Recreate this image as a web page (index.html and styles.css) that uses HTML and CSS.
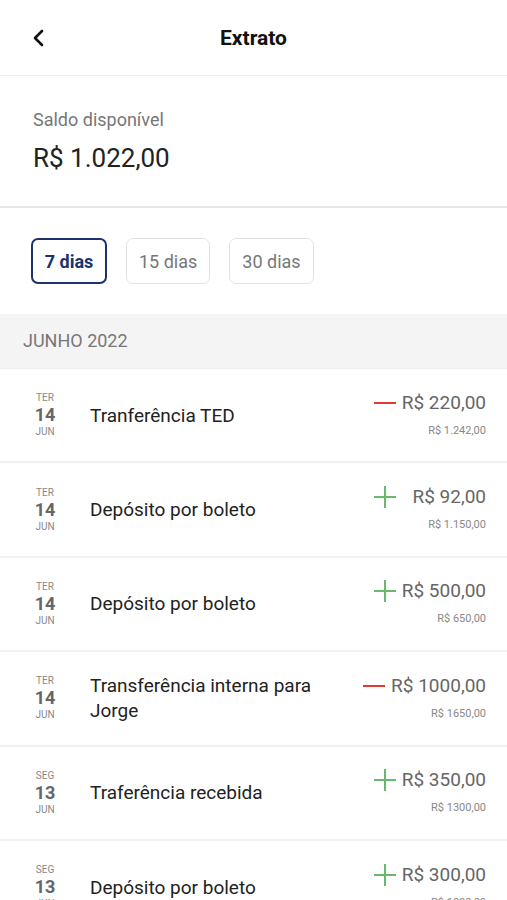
FILE: index.html
```html
<!DOCTYPE html>
<html lang="pt-BR">

<head>
  <meta charset="UTF-8" />
  <title>Extrato</title>
  <link rel="stylesheet" href="styles.css">
</head>

<body>
  <header class="topo">
    <svg class="voltar" width="14" height="18" viewBox="0 0 14 18">
      <path d="M10 2 L3 9 L10 16" fill="none" stroke="#111" stroke-width="2.6" stroke-linecap="round" stroke-linejoin="round" />
    </svg>
    <h1>Extrato</h1>
  </header>

  <section class="saldo">
    <p class="saldo-rotulo">Saldo disponível</p>
    <p class="saldo-valor">R$ 1.022,00</p>
  </section>

  <nav class="filtros">
    <button class="filtro ativo">7 dias</button>
    <button class="filtro">15 dias</button>
    <button class="filtro">30 dias</button>
  </nav>

  <div class="mes">JUNHO 2022</div>

  <ul class="lista">
    <li class="item">
      <div class="data"><span class="dia-sem">TER</span><span class="dia">14</span><span class="mes-ab">JUN</span></div>
      <div class="descricao">Tranferência TED</div>
      <div class="valores">
        <div class="linha-valor"><span class="menos"></span><span class="valor">R$ 220,00</span></div>
        <div class="saldo-item">R$ 1.242,00</div>
      </div>
    </li>
    <li class="item">
      <div class="data"><span class="dia-sem">TER</span><span class="dia">14</span><span class="mes-ab">JUN</span></div>
      <div class="descricao">Depósito por boleto</div>
      <div class="valores">
        <div class="linha-valor"><span class="mais"></span><span class="valor">R$ 92,00</span></div>
        <div class="saldo-item">R$ 1.150,00</div>
      </div>
    </li>
    <li class="item">
      <div class="data"><span class="dia-sem">TER</span><span class="dia">14</span><span class="mes-ab">JUN</span></div>
      <div class="descricao">Depósito por boleto</div>
      <div class="valores">
        <div class="linha-valor"><span class="mais"></span><span class="valor">R$ 500,00</span></div>
        <div class="saldo-item">R$ 650,00</div>
      </div>
    </li>
    <li class="item">
      <div class="data"><span class="dia-sem">TER</span><span class="dia">14</span><span class="mes-ab">JUN</span></div>
      <div class="descricao">Transferência interna para Jorge</div>
      <div class="valores">
        <div class="linha-valor"><span class="menos"></span><span class="valor">R$ 1000,00</span></div>
        <div class="saldo-item">R$ 1650,00</div>
      </div>
    </li>
    <li class="item">
      <div class="data"><span class="dia-sem">SEG</span><span class="dia">13</span><span class="mes-ab">JUN</span></div>
      <div class="descricao">Traferência recebida</div>
      <div class="valores">
        <div class="linha-valor"><span class="mais"></span><span class="valor">R$ 350,00</span></div>
        <div class="saldo-item">R$ 1300,00</div>
      </div>
    </li>
    <li class="item">
      <div class="data"><span class="dia-sem">SEG</span><span class="dia">13</span><span class="mes-ab">JUN</span></div>
      <div class="descricao">Depósito por boleto</div>
      <div class="valores">
        <div class="linha-valor"><span class="mais"></span><span class="valor">R$ 300,00</span></div>
        <div class="saldo-item">R$ 1000,00</div>
      </div>
    </li>
  </ul>
</body>

</html>
```

FILE: styles.css
```css
body {
  margin: 0;
  font-family: Roboto, "Liberation Sans", sans-serif;
  background: #fff;
  color: #222;
}

p {
  margin: 0;
}

.topo {
  position: relative;
  height: 75px;
  display: flex;
  align-items: center;
  justify-content: center;
  border-bottom: 1px solid #eeeeee;
}

.voltar {
  position: absolute;
  left: 32px;
  top: 29px;
}

.topo h1 {
  margin: 0;
  font-size: 21px;
  font-weight: 700;
  color: #111;
}

.saldo {
  padding: 32px 33px 0;
  height: 98px;
  border-bottom: 2px solid #e6e6e6;
}

.saldo-rotulo {
  font-size: 18px;
  color: #777;
  line-height: 24px;
}

.saldo-valor {
  font-size: 26px;
  color: #222;
  line-height: 32px;
  margin-top: 10px;
}

.filtros {
  display: flex;
  gap: 19px;
  padding: 30px 31px;
}

.filtro {
  height: 46px;
  padding: 0 12px;
  font-family: inherit;
  font-size: 18px;
  color: #777;
  background: #fff;
  border: 1px solid #e2e2e2;
  border-radius: 7px;
}

.filtro.ativo {
  border: 2px solid #1c326c;
  color: #1c326c;
  font-weight: 700;
  padding: 0 11px;
  width: 76px;
}

.mes {
  background: #f4f4f4;
  height: 54px;
  line-height: 54px;
  padding-left: 23px;
  font-size: 18px;
  color: #777;
  border-bottom: 1px solid #ececec;
}

.lista {
  list-style: none;
  margin: 0;
  padding: 0;
}

.item {
  display: flex;
  align-items: center;
  height: 92.4px;
  padding: 0 21px 0 23px;
  border-bottom: 2px solid #f1f1f1;
}

.data {
  width: 44px;
  display: flex;
  flex-direction: column;
  align-items: center;
  color: #888;
}

.dia-sem,
.mes-ab {
  font-size: 10px;
  line-height: 12px;
}

.dia {
  font-size: 18px;
  font-weight: 700;
  line-height: 22px;
  color: #666;
}

.descricao {
  flex: 1;
  margin-left: 23px;
  margin-right: 20px;
  font-size: 19px;
  line-height: 25px;
  color: #222;
}

.valores {
  display: flex;
  flex-direction: column;
  align-items: flex-end;
  margin-top: -2px;
}

.linha-valor {
  display: flex;
  align-items: center;
  gap: 6px;
}

.valor {
  min-width: 84px;
  text-align: right;
  font-size: 19px;
  line-height: 24px;
  color: #666;
}

.menos {
  width: 22px;
  height: 2px;
  background: #e53935;
}

.mais {
  position: relative;
  width: 22px;
  height: 22px;
}

.mais::before,
.mais::after {
  content: "";
  position: absolute;
  background: #66bb6a;
}

.mais::before {
  left: 0;
  right: 0;
  top: 10px;
  height: 2px;
}

.mais::after {
  top: 0;
  bottom: 0;
  left: 10px;
  width: 2px;
}

.saldo-item {
  margin-top: 9px;
  font-size: 11px;
  line-height: 14px;
  color: #888;
}
```
